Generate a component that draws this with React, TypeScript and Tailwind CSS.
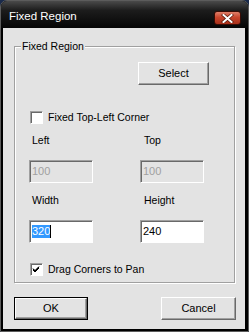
import React from "react";

const font = { fontFamily: '"Liberation Sans", Arial, sans-serif' };

function Btn({ label, w, def }: { label: string; w: string; def?: boolean }) {
  const inner = (
    <div className="flex-1 flex items-center justify-center bg-[#e3e3e3] border border-t-white border-l-white border-b-[#696969] border-r-[#696969] shadow-[inset_-1px_-1px_0_#a0a0a0] text-[11px] text-black">
      {label}
    </div>
  );
  if (def) {
    return <div className={`${w} h-[23px] flex border border-black`}>{inner}</div>;
  }
  return <div className={`${w} h-[23px] flex`}>{inner}</div>;
}

function Check({ checked, label }: { checked?: boolean; label: string }) {
  return (
    <div className="flex items-center h-[13px] ml-[15px]">
      <div className="w-[13px] h-[13px] bg-white border border-t-[#a0a0a0] border-l-[#a0a0a0] border-b-white border-r-white shadow-[inset_1px_1px_0_#696969] flex items-center justify-center">
        {checked && (
          <svg width="9" height="9" viewBox="0 0 9 9">
            <path d="M1 4 L3 6 L7 2 M1 5 L3 7 L7 3 M1 3.5 L3 5.5 L7 1.5" stroke="#000" strokeWidth="1" fill="none" />
          </svg>
        )}
      </div>
      <span className="ml-[5px] text-[10.5px] leading-[13px] text-black">{label}</span>
    </div>
  );
}

function Edit({ disabled, children }: { disabled?: boolean; children: React.ReactNode }) {
  return (
    <div
      className={`w-[64px] h-[23px] flex items-center pl-[2px] border border-t-[#a0a0a0] border-l-[#a0a0a0] border-b-white border-r-white shadow-[inset_1px_1px_0_#696969] text-[11px] ${
        disabled ? "bg-[#e3e3e3] text-[#a0a0a0]" : "bg-white text-black"
      }`}
    >
      {children}
    </div>
  );
}

export default function App() {
  return (
    <div style={font} className="w-[249px] h-[332px] bg-[#1a2a4a]">
      <div className="w-[249px] h-[332px] flex flex-col bg-black border border-[#5c5c5c] rounded-t-[7px] overflow-hidden">
        <div className="h-[27px] flex items-start justify-between bg-[linear-gradient(to_bottom,#4a4a4a_0%,#1c1c1c_35%,#050505_100%)]">
          <span className="ml-[8px] mt-[8px] text-[11.5px] leading-[14px] text-white">Fixed Region</span>
          <div className="mt-[10px] mr-[7px] w-[27px] h-[14px] rounded-[3px] border border-[#3a0c04] bg-[linear-gradient(to_bottom,#e0806a_0%,#c8452c_45%,#a8301a_100%)] flex items-center justify-center">
            <svg width="13" height="9" viewBox="0 0 13 9">
              <path d="M2.5 1 L10.5 8 M10.5 1 L2.5 8" stroke="#5a1a0c" strokeWidth="3.4" strokeLinecap="square" />
              <path d="M2.5 1 L10.5 8 M10.5 1 L2.5 8" stroke="#ffffff" strokeWidth="2" strokeLinecap="square" />
            </svg>
          </div>
        </div>
        <div className="flex-1 ml-[2px] mr-[3px] mb-[2px] bg-[#e3e3e3] flex flex-col text-black">
          <div className="relative ml-[11px] mr-[10px] mt-[18px] h-[237px] border border-[#a0a0a0] shadow-[inset_1px_1px_0_#fff,1px_1px_0_#fff] flex flex-col">
            <span className="absolute left-[6px] top-[-7px] px-[1px] bg-[#e3e3e3] text-[10.5px] leading-[13px]">Fixed Region</span>
            <div className="mt-[15px] ml-[123px]">
              <Btn label="Select" w="w-[71px]" />
            </div>
            <div className="mt-[26px]">
              <Check label="Fixed Top-Left Corner" />
            </div>
            <div className="mt-[10px] pl-[14px] grid grid-cols-[64px_64px] gap-x-[47px] text-[10.5px] leading-[13px]">
              <span className="pl-[3px]">Left</span>
              <span className="pl-[4px]">Top</span>
            </div>
            <div className="mt-[13px] pl-[14px] grid grid-cols-[64px_64px] gap-x-[47px]">
              <Edit disabled>100</Edit>
              <Edit disabled>100</Edit>
            </div>
            <div className="mt-[11px] pl-[14px] grid grid-cols-[64px_64px] gap-x-[47px] text-[10.5px] leading-[13px]">
              <span className="pl-[3px]">Width</span>
              <span className="pl-[4px]">Height</span>
            </div>
            <div className="mt-[13px] pl-[14px] grid grid-cols-[64px_64px] gap-x-[47px]">
              <Edit>
                <span className="bg-[#3399ff] text-white leading-[13px]">320</span>
                <span className="w-[1px] h-[13px] bg-black" />
              </Edit>
              <Edit>240</Edit>
            </div>
            <div className="mt-[20px]">
              <Check checked label="Drag Corners to Pan" />
            </div>
          </div>
          <div className="mt-[14px] ml-[11px] mr-[9px] flex justify-between">
            <Btn label="OK" w="w-[74px]" def />
            <Btn label="Cancel" w="w-[75px]" />
          </div>
        </div>
      </div>
    </div>
  );
}
